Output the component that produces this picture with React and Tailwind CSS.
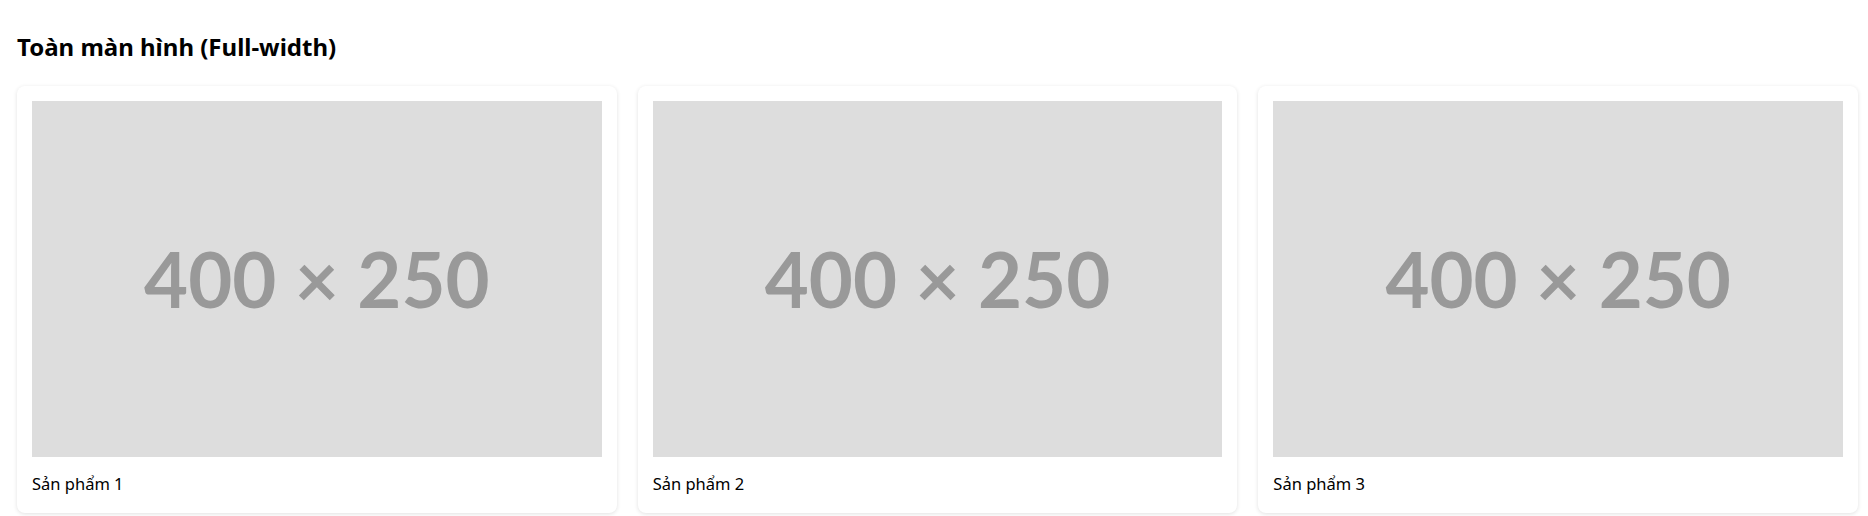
import React from "react";

const PRODUCTS = [
  { id: 1, name: "Sản phẩm 1" },
  { id: 2, name: "Sản phẩm 2" },
  { id: 3, name: "Sản phẩm 3" },
];

export default function App() {
  return (
    <div
      className="min-h-screen bg-white pl-[17px] pr-[10px] pt-[31px]"
      style={{ fontFamily: '"Noto Sans", "Open Sans", sans-serif' }}
    >
      <h2 className="text-[24px] font-bold leading-[32px] text-black">
        Toàn màn hình (Full-width)
      </h2>

      {/* GRID */}
      <div className="mt-[23px] grid grid-cols-3 gap-[21px]">
        {PRODUCTS.map((p) => (
          <div
            key={p.id}
            className="rounded-lg bg-white p-[15px] pb-[17px] shadow-[0_1px_4px_rgba(0,0,0,0.12)]"
          >
            <div className="flex aspect-[8/5] w-full items-center justify-center bg-[#dddddd]">
              <span
                className="text-[76px] font-bold text-[#999999]"
                style={{ fontFamily: "Lato, sans-serif" }}
              >
                400 × 250
              </span>
            </div>
            <p className="mt-[15px] text-[16.5px] leading-[24px] text-black">
              {p.name}
            </p>
          </div>
        ))}
      </div>
    </div>
  );
}
